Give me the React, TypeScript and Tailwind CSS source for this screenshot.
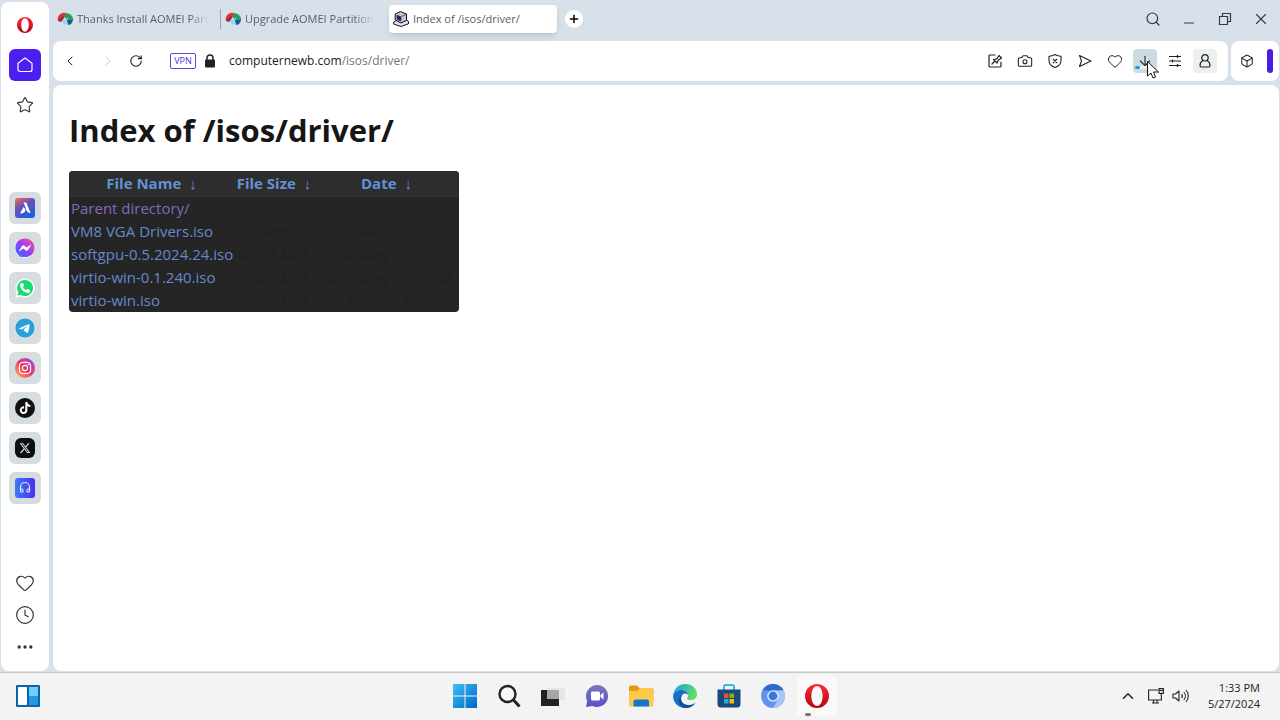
import React from 'react';
import {
  Heart, Clock, Ellipsis, Star, Search, Plus, X, Minus, ChevronLeft, ChevronRight, ChevronUp,
  RotateCw, Camera, Box, ArrowDown,
} from 'lucide-react';
import { FaFacebookMessenger, FaInstagram, FaTelegram, FaTiktok, FaXTwitter, FaPhone } from 'react-icons/fa6';
import { clsx } from 'clsx';

interface IconProps {
  className?: string;
}

const OperaIcon = ({ className }: IconProps) => (
  <svg viewBox="0 0 24 24" className={className}>
    <defs>
      <linearGradient id="opera" x1="0" y1="0" x2="0" y2="1">
        <stop offset="0" stopColor="#ff2a3a" />
        <stop offset="1" stopColor="#b00518" />
      </linearGradient>
    </defs>
    <path
      fillRule="evenodd"
      fill="url(#opera)"
      d="M12 0a12 12 0 1 0 0 24 12 12 0 0 0 0-24zm0 2c3.200 0 5.600 4.200 5.600 10S15.200 22 12 22 6.400 17.800 6.400 12 8.800 2 12 2z"
    />
  </svg>
);

const HomeIcon = ({ className }: IconProps) => (
  <svg viewBox="0 0 16 16" className={className} fill="none" stroke="currentColor" strokeWidth="1.2" strokeLinejoin="round">
    <path d="M1 6.200 8 1l7 5.200V12.500a2 2 0 0 1-2 2H3a2 2 0 0 1-2-2z" />
  </svg>
);

const AomeiIcon = ({ className }: IconProps) => (
  <svg viewBox="0 0 16 14" className={className}>
    <path fill="#25a05a" d="M8 1c5 0 8 3 8 6l-5 1-4-3z" />
    <path fill="#dc3545" d="M1 9C-.5 4 4 0 9 1L7 6z" />
    <path fill="#8c2a3c" d="M1 9l5-5 1 2-3 4z" />
    <path fill="#8fd6ee" d="M5 9c3 0 4-3 6-3l-1 6c-2 1-4 0-5-3z" />
    <path fill="#1c5a8c" d="M10 8l6-1c0 3-2 6-5 6z" />
  </svg>
);

const ComputerIcon = ({ className }: IconProps) => (
  <svg viewBox="0 0 16 16" className={className} stroke="#111" strokeLinejoin="round">
    <path fill="#e2e2ea" d="M.7 11l3-2 9-.5 2.800 2v2.200L8 15.500.7 13z" />
    <path fill="#c4c4d4" d="M2.200 3 7.500.600l6 2.400v6.500L8 12 2.200 9z" />
    <path fill="#1d1d7a" stroke="#333" strokeWidth="0.6" d="M3.800 4.200 8 5.700V10L4.200 8.500z" />
    <path fill="none" strokeWidth="0.6" d="M8.500 5.500l5-2.200" />
  </svg>
);

const SnapshotEditIcon = ({ className }: IconProps) => (
  <svg viewBox="0 0 16 16" className={className} fill="none" stroke="currentColor" strokeWidth="1.2" strokeLinejoin="round" strokeLinecap="round">
    <path d="M8 2H3a1 1 0 0 0-1 1v10a1 1 0 0 0 1 1h10a1 1 0 0 0 1-1V9M5 11l3-3M6.500 6.500l3.500 3.500M7 7c1-1 2-1 2.800-1.200L12 2.500 14.500 5l-3.200 2.200C11 8 11 8.800 10 9.600" />
  </svg>
);

const ShieldIcon = ({ className }: IconProps) => (
  <svg viewBox="0 0 16 16" className={className} fill="none" stroke="currentColor" strokeWidth="1.1" strokeLinejoin="round">
    <path d="M8 1.500c1.800 1.200 3.800 1.700 6 1.700v4.300c0 3.800-3 6-6 7-3-1-6-3.200-6-7V3.200c2.200 0 4.200-.5 6-1.700zM6 6l4 4M10 6l-4 4" />
  </svg>
);

const SendIcon = ({ className }: IconProps) => (
  <svg viewBox="0 0 16 16" className={className} fill="none" stroke="currentColor" strokeWidth="1.1" strokeLinejoin="round">
    <path d="M2.500 2.500 14 8 2.500 13.500l2-5.500z" />
  </svg>
);

const TuneIcon = ({ className }: IconProps) => (
  <svg viewBox="0 0 16 16" className={className} fill="none" stroke="currentColor" strokeWidth="1.2">
    <path d="M2 3.500h12M2 8h12M2 12.500h12M10.500 2v3M5.500 6.500v3M10.500 11v3" />
  </svg>
);

const ProfileIcon = ({ className }: IconProps) => (
  <svg viewBox="0 0 16 16" className={className} fill="none" stroke="currentColor" strokeWidth="1.2">
    <circle cx="8" cy="4.800" r="3.200" />
    <path d="M6 7.500C4 8.500 3 10.500 3 12.500a1.500 1.500 0 0 0 1.500 1.500h7a1.500 1.500 0 0 0 1.500-1.500c0-2-1-4-3-5" />
  </svg>
);

const LockIcon = ({ className }: IconProps) => (
  <svg viewBox="0 0 12 14" className={className}>
    <path d="M3 6V4a3 3 0 0 1 6 0v2" fill="none" stroke="#222" strokeWidth="1.5" />
    <rect x="1" y="5.500" width="10" height="8" rx="1" fill="#222" />
  </svg>
);

const RestoreIcon = ({ className }: IconProps) => (
  <svg viewBox="0 0 14 14" className={className} fill="none" stroke="currentColor" strokeWidth="1.2">
    <path d="M1.500 4.500h8v8h-8zM4.500 4.500v-3h8v8h-3" />
  </svg>
);

const AriaIcon = () => (
  <svg viewBox="0 0 20 20" className="size-5">
    <defs>
      <linearGradient id="aria" x1="0" y1="0" x2="0.6" y2="1">
        <stop offset="0" stopColor="#ff6a3d" />
        <stop offset="0.45" stopColor="#6a52b8" />
        <stop offset="1" stopColor="#1f5fe0" />
      </linearGradient>
    </defs>
    <rect width="20" height="20" rx="3" fill="url(#aria)" />
    <path d="M8.500 4.500h2.800L15.500 15c-3 0-4-2-5.500-7zM8.500 9l2 2.500c0 2.500-2 4-5.500 4z" fill="#fff" />
  </svg>
);

const MessengerIcon = () => (
  <span className="flex size-5 items-center justify-center">
    <svg className="absolute size-0">
      <linearGradient id="messenger" x1="0" y1="1" x2="1" y2="0">
        <stop offset="0" stopColor="#1f7bff" />
        <stop offset="0.5" stopColor="#9a3cf5" />
        <stop offset="1" stopColor="#ff5f7c" />
      </linearGradient>
    </svg>
    <FaFacebookMessenger className="size-5 rounded-full bg-white" fill="url(#messenger)" />
  </span>
);

const WhatsappIcon = () => (
  <span className="grid size-5 place-items-center">
    <svg viewBox="0 0 20 20" className="col-start-1 row-start-1 size-5">
      <path d="M10 .5a9.500 9.500 0 1 1-4.500 17.900L.5 19.500l1.200-4.800A9.500 9.500 0 0 1 10 .5z" fill="#fff" />
      <path d="M10 2a8 8 0 1 1-4 14.900L2.500 17.500l.9-3.200A8 8 0 0 1 10 2z" fill="#15dc6c" />
    </svg>
    <FaPhone className="col-start-1 row-start-1 size-2.5 -scale-x-100 rotate-90 text-white" />
  </span>
);

const PlayerIcon = () => (
  <svg viewBox="0 0 20 20" className="size-5">
    <defs>
      <linearGradient id="player" x1="0" y1="0" x2="1" y2="0">
        <stop offset="0" stopColor="#3b7bf0" />
        <stop offset="1" stopColor="#4b2ff0" />
      </linearGradient>
    </defs>
    <rect width="20" height="20" rx="3" fill="url(#player)" />
    <path
      d="M5.500 12V9a4.500 4.500 0 0 1 9 0v3M5.500 11h1a1.500 1.500 0 0 1 1.500 1.500v1a1.500 1.500 0 0 1-2.500 0zM14.500 11h-1a1.500 1.500 0 0 0-1.500 1.500v1a1.500 1.500 0 0 0 2.500 0z"
      fill="none"
      stroke="#dfe4ff"
      strokeWidth="1.2"
    />
  </svg>
);

const sidebarApps = [
  { name: 'Aria', icon: <AriaIcon /> },
  { name: 'Messenger', icon: <MessengerIcon /> },
  { name: 'WhatsApp', icon: <WhatsappIcon /> },
  { name: 'Telegram', icon: <FaTelegram className="size-5 rounded-full bg-white text-[#2a9fd8]" /> },
  {
    name: 'Instagram',
    icon: (
      <span className="flex size-5 items-center justify-center rounded-full bg-linear-to-tr from-[#ffb030] via-[#f0306a] to-[#8a35e8]">
        <FaInstagram className="size-3.5 text-white" />
      </span>
    ),
  },
  {
    name: 'TikTok',
    icon: (
      <span className="flex size-5 items-center justify-center rounded-full bg-[#111]">
        <FaTiktok className="size-3 text-white" />
      </span>
    ),
  },
  {
    name: 'X',
    icon: (
      <span className="flex size-5 items-center justify-center rounded-md bg-[#0c0f12]">
        <FaXTwitter className="size-3 text-[#d8d8d8]" />
      </span>
    ),
  },
  { name: 'Player', icon: <PlayerIcon /> },
];

const Sidebar = () => (
  <aside className="flex w-12 shrink-0 flex-col items-center rounded-lg bg-white pt-[7px] text-[#333]">
    <button aria-label="Opera menu" className="flex size-8 items-center justify-center">
      <OperaIcon className="size-4" />
    </button>
    <button aria-label="Home" className="mt-2 flex size-8 items-center justify-center rounded-md bg-[#4a1fef] text-white">
      <HomeIcon className="size-4" />
    </button>
    <button aria-label="Bookmarks" className="mt-2 flex size-8 items-center justify-center">
      <Star className="size-[18px]" strokeWidth={1.5} />
    </button>
    <nav className="mt-[71px] flex flex-col gap-2">
      {sidebarApps.map((app) => (
        <button key={app.name} aria-label={app.name} className="flex size-8 items-center justify-center rounded-md bg-[#d5dde0]">
          {app.icon}
        </button>
      ))}
    </nav>
    <div className="mt-auto mb-2 flex flex-col">
      <button aria-label="Pinboards" className="flex size-8 items-center justify-center">
        <Heart className="size-5" strokeWidth={1.4} />
      </button>
      <button aria-label="History" className="flex size-8 items-center justify-center">
        <Clock className="size-5" strokeWidth={1.4} />
      </button>
      <button aria-label="More" className="flex size-8 items-center justify-center">
        <Ellipsis className="size-5" strokeWidth={2} />
      </button>
    </div>
  </aside>
);

const tabs = [
  { title: 'Thanks Install AOMEI Part', icon: AomeiIcon, active: false },
  { title: 'Upgrade AOMEI Partition', icon: AomeiIcon, active: false },
  { title: 'Index of /isos/driver/', icon: ComputerIcon, active: true },
];

const TabBar = () => (
  <header className="flex h-[39px] items-start text-[#55606a]">
    <div role="tablist" className="flex pt-[3px]">
      {tabs.map((tab, i) => (
        <button
          key={tab.title}
          role="tab"
          aria-selected={tab.active}
          className={clsx('flex h-7 w-[168px] items-center pl-1 text-left', tab.active && 'rounded-sm bg-white shadow-md')}
        >
          <tab.icon className="size-4 shrink-0" />
          <span className={clsx('ml-1 text-[11px] whitespace-nowrap', !tab.active && 'mask-r-from-85%')}>
            {tab.title}
          </span>
          {i === 0 && <span className="ml-auto h-5 w-px bg-[#9aa4ae]" />}
        </button>
      ))}
    </div>
    <button aria-label="New tab" className="mt-2 ml-2 flex size-[18px] items-center justify-center rounded-full bg-white text-black">
      <Plus className="size-3" strokeWidth={3} />
    </button>
    <div className="ml-auto flex text-[#2f3a44]">
      <button aria-label="Search tabs" className="flex h-[34px] w-9 items-center justify-center">
        <Search className="size-4" strokeWidth={1.8} />
      </button>
      <button aria-label="Minimize" className="flex h-[34px] w-9 items-center justify-center pt-2">
        <Minus className="size-4" strokeWidth={1.5} />
      </button>
      <button aria-label="Restore" className="flex h-[34px] w-9 items-center justify-center">
        <RestoreIcon className="size-3.5" />
      </button>
      <button aria-label="Close" className="flex h-[34px] w-9 items-center justify-center">
        <X className="size-[18px]" strokeWidth={1.5} />
      </button>
    </div>
  </header>
);

const actions = [
  { name: 'Edit page', icon: <SnapshotEditIcon className="size-4" /> },
  { name: 'Snapshot', icon: <Camera className="size-4" strokeWidth={1.6} /> },
  { name: 'Ad blocker', icon: <ShieldIcon className="size-4" /> },
  { name: 'Send to My Flow', icon: <SendIcon className="size-4" /> },
  { name: 'Add to bookmarks', icon: <Heart className="size-4" strokeWidth={1.5} /> },
  { name: 'Downloads', icon: <ArrowDown className="size-4" strokeWidth={1.6} />, style: 'bg-[#cddae0]' },
  { name: 'Easy setup', icon: <TuneIcon className="size-4" /> },
  { name: 'Profile', icon: <ProfileIcon className="size-4" />, style: 'bg-[#eceff0]' },
];

const Toolbar = () => (
  <div className="flex gap-[3px] text-[#222]">
    <div className="flex h-10 flex-1 items-center rounded-lg bg-white pr-[11px] pl-[5px]">
      <button aria-label="Back" className="flex size-6 items-center justify-center">
        <ChevronLeft className="size-4" strokeWidth={1.5} />
      </button>
      <button aria-label="Forward" disabled className="ml-3.5 flex size-6 items-center justify-center text-[#c8c8c8]">
        <ChevronRight className="size-4" strokeWidth={1.5} />
      </button>
      <button aria-label="Reload" className="ml-1 flex size-6 items-center justify-center">
        <RotateCw className="size-3.5" strokeWidth={1.9} />
      </button>
      <button className="ml-[22px] flex h-4 w-[26px] items-center justify-center rounded-xs border border-[#5b45e0] text-[9px] text-[#4a35d8]">
        VPN
      </button>
      <LockIcon className="ml-2 h-3.5 w-3" />
      <a href="#driver" className="ml-[13px] text-xs">
        computernewb.com<span className="text-[#777]">/isos/driver/</span>
      </a>
      <div className="ml-auto flex gap-1.5">
        {actions.map((action) => (
          <button
            key={action.name}
            aria-label={action.name}
            className={clsx('relative flex size-6 items-center justify-center rounded-sm', action.style)}
          >
            {action.icon}
            {action.name === 'Downloads' && (
              <>
                <span className="absolute bottom-1 left-0.5 h-[3px] w-5 rounded-full bg-[#e8f1f5]">
                  <span className="block h-full w-1/4 rounded-full bg-[#1f9be0]" />
                </span>
                <svg viewBox="0 0 12 18" className="absolute top-3 left-3.5 z-10 h-[18px] w-3">
                  <path d="M.5.500v14.500l3.500-3 2 5 2.500-1-2-5h5z" fill="#fff" stroke="#111" />
                </svg>
              </>
            )}
          </button>
        ))}
      </div>
    </div>
    <div className="flex h-10 w-12 items-center rounded-lg bg-white pr-1.5 pl-2">
      <button aria-label="Extensions" className="flex size-4 items-center justify-center">
        <Box className="size-3.5" strokeWidth={1.8} />
      </button>
      <span className="ml-auto h-6 w-1.5 rounded-full bg-[#4a1fe0]" />
    </div>
  </div>
);

const files = [
  { name: 'Parent directory/', size: '-', date: '-', visited: true },
  { name: 'VM8 VGA Drivers.iso', size: '7.4 MiB', date: '2024-May-12 22:14' },
  { name: 'softgpu-0.5.2024.24.iso', size: '405.3 MiB', date: '2024-May-12 22:10' },
  { name: 'virtio-win-0.1.240.iso', size: '598.5 MiB', date: '2024-May-12 22:32' },
  { name: 'virtio-win.iso', size: '598.5 MiB', date: '2024-May-12 22:35' },
];

const columns = [
  { label: 'File Name', width: 'w-[165px]' },
  { label: 'File Size', width: 'w-20' },
  { label: 'Date', width: '' },
];

const DirectoryPage = () => (
  <main className="flex-1 rounded-lg bg-white px-4 pt-6 text-[#161616]">
    <h1 className="text-[31px] leading-[42px] font-bold">Index of /isos/driver/</h1>
    <div className="mt-5 w-[390px] overflow-hidden rounded-sm bg-[#252525]">
      <table className="w-full table-fixed text-[15px] leading-[23px]">
        <thead className="bg-[#2d2d2d]">
          <tr className="border-b border-[#333]">
            {columns.map((col) => (
              <th key={col.label} className={clsx('p-0 leading-[25px] font-bold whitespace-nowrap text-[#6291d6]', col.width)}>
                <a href="#sort">{col.label}</a>
                <a href="#sort-desc" className="ml-2">↓</a>
              </th>
            ))}
          </tr>
        </thead>
        <tbody>
          {files.map((file) => (
            <tr key={file.name}>
              <td className="p-0 pl-0.5 whitespace-nowrap">
                <a href="#file" className={file.visited ? 'text-[#8468b8]' : 'text-[#6688cc]'}>{file.name}</a>
              </td>
              <td className="p-0 pl-1 whitespace-nowrap text-[#212121]">{file.size}</td>
              <td className="p-0 pl-1.5 whitespace-nowrap text-[#212121]">{file.date}</td>
            </tr>
          ))}
        </tbody>
      </table>
    </div>
  </main>
);

const WidgetsIcon = () => (
  <svg viewBox="0 0 24 22" className="h-[22px] w-6">
    <rect width="24" height="22" rx="1" fill="#0f62ae" />
    <rect x="2" y="2" width="9" height="18" rx="1" fill="#fff" />
    <rect x="13" y="2" width="9" height="9" fill="#6cd0fb" />
    <rect x="13" y="11" width="9" height="9" fill="#2596e2" />
  </svg>
);

const taskbarApps = [
  {
    name: 'Start',
    icon: (
      <svg viewBox="0 0 24 24" className="size-6">
        <defs>
          <linearGradient id="start" x1="0" y1="0" x2="1" y2="1">
            <stop offset="0" stopColor="#3cc0f5" />
            <stop offset="1" stopColor="#0067c8" />
          </linearGradient>
        </defs>
        <path d="M0 0h11.500v11.500H0zM12.500 0H24v11.500H12.500zM0 12.500h11.500V24H0zM12.500 12.500H24V24H12.500z" fill="url(#start)" />
      </svg>
    ),
  },
  {
    name: 'Search',
    icon: (
      <svg viewBox="0 0 24 24" className="size-6" fill="none" stroke="#222" strokeWidth="2.4">
        <circle cx="10.500" cy="10" r="8" fill="#f7f7f7" />
        <path d="m16.500 16 6 6.500" strokeWidth="3" />
      </svg>
    ),
  },
  {
    name: 'Task view',
    icon: (
      <svg viewBox="0 0 24 24" className="size-6">
        <rect x="6" y="4" width="18" height="12" fill="#e6e6e6" />
        <rect x="0" y="6" width="18" height="16" fill="#222" />
        <rect x="6" y="6" width="12" height="9" fill="#a6a6a6" />
      </svg>
    ),
  },
  {
    name: 'Chat',
    icon: (
      <svg viewBox="0 0 24 24" className="size-6">
        <defs>
          <linearGradient id="chat" x1="0" y1="0" x2="0" y2="1">
            <stop offset="0" stopColor="#7b78b8" />
            <stop offset="1" stopColor="#5a50cc" />
          </linearGradient>
        </defs>
        <path d="M12 1a11 11 0 1 1-4.500 21L1 23l1.200-6A11 11 0 0 1 12 1z" fill="url(#chat)" />
        <rect x="6" y="7.500" width="9" height="9" rx="1.500" fill="#fff" />
        <path d="m15.500 11 3-2.500v7l-3-2.500z" fill="#fff" />
      </svg>
    ),
  },
  {
    name: 'File Explorer',
    icon: (
      <svg viewBox="0 0 26 24" className="h-6 w-[26px]">
        <path d="M1 3a1.500 1.500 0 0 1 1.500-1.500H9L11.500 4H24a1.500 1.500 0 0 1 1.500 1.500V10H1z" fill="#e09d12" />
        <path d="M1 7h8l3-3h12a1.500 1.500 0 0 1 1.500 1.500v16a1 1 0 0 1-1 1H2a1 1 0 0 1-1-1z" fill="#fdc94a" />
        <path d="M5.500 22.500v-5a2 2 0 0 1 2-2h11.500a2 2 0 0 1 2 2v5z" fill="#1577c6" />
      </svg>
    ),
  },
  {
    name: 'Edge',
    icon: (
      <svg viewBox="0 0 24 24" className="size-6">
        <defs>
          <linearGradient id="edge-top" x1="0" y1="0" x2="1" y2="0.4">
            <stop offset="0" stopColor="#1b9de2" />
            <stop offset="1" stopColor="#5fdc6a" />
          </linearGradient>
        </defs>
        <path d="M.2 11C1 4.500 6 0 12.200 0 19 0 24 4.600 24 10c0 4-3 6-6 6-2.500 0-4-1-4-1.800 0-.6 1.200-1.200 1.200-3C15.200 8.500 12 6 8 6 4 6 1 8.500.2 11z" fill="url(#edge-top)" />
        <path d="M.2 11C1 8.500 4 6 8 6c4 0 7.200 2.500 7.200 5.200-.6-1.200-1.800-1.700-3-1.700-2.500 0-4.200 2.200-4.200 5C8 19 12 22 16 22a12 12 0 0 1-4 2C5 24-.5 18 .2 11z" fill="#1670cb" />
        <path d="M8 14.500C8 19 12 21 16 21c3 0 5-1.200 6.500-2.500C21 22 17 24 13 24c-4.500 0-7.500-4-7-8 .4-3 2.500-5.500 5.500-6.400C9.500 10.400 8 12 8 14.500z" fill="#134c93" />
      </svg>
    ),
  },
  {
    name: 'Microsoft Store',
    icon: (
      <svg viewBox="0 0 24 24" className="size-6">
        <path d="M7 6V2.500A1.500 1.500 0 0 1 8.500 1h7A1.500 1.500 0 0 1 17 2.500V6" fill="none" stroke="#35b9e9" strokeWidth="2" />
        <path d="M.5 5.500h23V20a3.500 3.500 0 0 1-3.500 3.500H4A3.500 3.500 0 0 1 .5 20z" fill="#184a7c" />
        <path d="M7 9.500h4.500V14H7z" fill="#f25022" />
        <path d="M12.500 9.500H17V14h-4.500z" fill="#7fba00" />
        <path d="M7 15h4.500v4.500H7z" fill="#28a8ea" />
        <path d="M12.500 15H17v4.500h-4.500z" fill="#ffb900" />
      </svg>
    ),
  },
  {
    name: 'Chromium',
    icon: (
      <svg viewBox="0 0 24 24" className="size-6">
        <circle cx="12" cy="12" r="12" fill="#5f94ee" />
        <path d="M1.600 6A12 12 0 0 1 22.400 6L12 7z" fill="#2f69cf" />
        <path d="M12 6.500h10.700A12 12 0 0 1 12 24l5-9z" fill="#a6c5f8" />
        <circle cx="12" cy="12" r="5.800" fill="#e4edfd" />
        <circle cx="12" cy="12" r="4.400" fill="#3a77dd" />
      </svg>
    ),
  },
  { name: 'Opera', icon: <OperaIcon className="size-6" />, active: true },
];

const Taskbar = () => (
  <footer className="grid h-12 grid-cols-[1fr_auto_1fr] items-center border-t border-[#c4c8ca] bg-[#f3f3f3] pb-px pl-px text-[#222]">
    <button aria-label="Widgets" className="ml-[7px] flex size-10 items-center justify-center">
      <WidgetsIcon />
    </button>
    <div className="flex gap-1">
      {taskbarApps.map((app) => (
        <button
          key={app.name}
          aria-label={app.name}
          className={clsx('relative flex size-10 items-center justify-center rounded-sm', app.active && 'bg-[#f9f9f9]')}
        >
          {app.icon}
          {app.active && <span className="absolute bottom-0 left-2 h-[3px] w-1.5 rounded-full bg-[#777]" />}
        </button>
      ))}
    </div>
    <div className="flex items-center justify-self-end pr-5">
      <button aria-label="Show hidden icons" className="flex size-6 items-center justify-center">
        <ChevronUp className="size-[18px]" strokeWidth={2} />
      </button>
      <button aria-label="Network and volume" className="ml-2 flex items-center gap-2">
        <svg viewBox="0 0 16 16" className="size-4" fill="none" stroke="currentColor" strokeWidth="1.1">
          <path d="M10 2H.6v10h12.800V8M4 15h7M5.500 12v3M9 12v3M11 .6h4.400v4.800H11zM13.200 5.400V8M11 2.500h4.400" />
        </svg>
        <svg viewBox="0 0 18 16" className="h-4 w-[18px]" fill="none" stroke="currentColor" strokeWidth="1.1" strokeLinejoin="round">
          <path d="M1 6v4h2.500L7 13V3L3.500 6zM9.500 6a3 3 0 0 1 0 4M11.800 4a6 6 0 0 1 0 8M14 2a9 9 0 0 1 0 12" />
        </svg>
      </button>
      <button className="ml-[18px] text-right text-[11px] leading-4">
        1:33 PM
        <br />
        5/27/2024
      </button>
    </div>
  </footer>
);

export default function App() {
  return (
    <div className="flex min-h-screen flex-col bg-[#d8e1e9] font-['Open_Sans','Noto_Sans',sans-serif]">
      <div className="flex flex-1 gap-1 px-px pt-0.5 pb-px">
        <Sidebar />
        <div className="flex min-w-0 flex-1 flex-col">
          <TabBar />
          <Toolbar />
          <div className="mt-1 flex flex-1 flex-col">
            <DirectoryPage />
          </div>
        </div>
      </div>
      <Taskbar />
    </div>
  );
}
